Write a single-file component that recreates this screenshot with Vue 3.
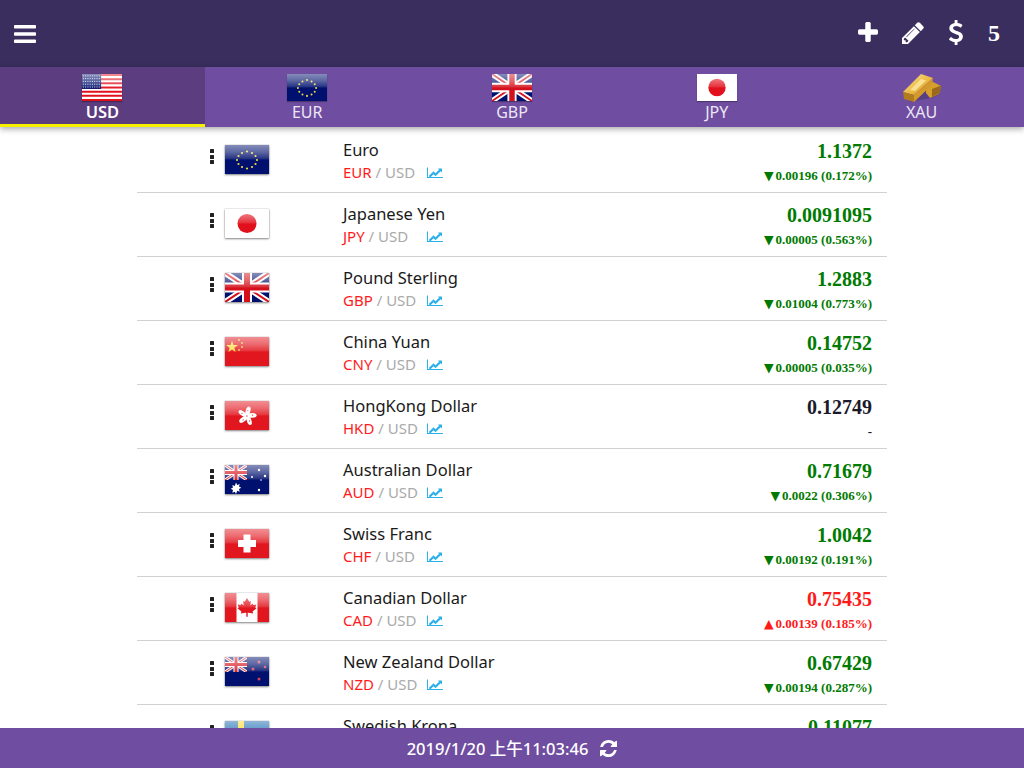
<script setup>
const tabs = [
  { code: 'USD', active: true },
  { code: 'EUR' },
  { code: 'GBP' },
  { code: 'JPY' },
  { code: 'XAU' }
]
const rows = [
  { code: 'EUR', name: 'Euro', price: '1.1372', change: '▼', diff: '0.00196 (0.172%)', tone: 'down' },
  { code: 'JPY', name: 'Japanese Yen', price: '0.0091095', change: '▼', diff: '0.00005 (0.563%)', tone: 'down' },
  { code: 'GBP', name: 'Pound Sterling', price: '1.2883', change: '▼', diff: '0.01004 (0.773%)', tone: 'down' },
  { code: 'CNY', name: 'China Yuan', price: '0.14752', change: '▼', diff: '0.00005 (0.035%)', tone: 'down' },
  { code: 'HKD', name: 'HongKong Dollar', price: '0.12749', change: '', diff: '-', tone: 'flat' },
  { code: 'AUD', name: 'Australian Dollar', price: '0.71679', change: '▼', diff: '0.0022 (0.306%)', tone: 'down' },
  { code: 'CHF', name: 'Swiss Franc', price: '1.0042', change: '▼', diff: '0.00192 (0.191%)', tone: 'down' },
  { code: 'CAD', name: 'Canadian Dollar', price: '0.75435', change: '▲', diff: '0.00139 (0.185%)', tone: 'up' },
  { code: 'NZD', name: 'New Zealand Dollar', price: '0.67429', change: '▼', diff: '0.00194 (0.287%)', tone: 'down' },
  { code: 'SEK', name: 'Swedish Krona', price: '0.11077', change: '▼', diff: '0.00031 (0.279%)', tone: 'down' }
]
</script>

<template>
  <div class="app">
    <svg class="sprite" width="0" height="0" aria-hidden="true">
      <defs>
        <linearGradient id="gloss" x1="0" y1="0" x2="0" y2="1">
          <stop offset="0" stop-color="#fff" stop-opacity=".52" />
          <stop offset=".25" stop-color="#fff" stop-opacity=".36" />
          <stop offset=".46" stop-color="#fff" stop-opacity=".16" />
          <stop offset=".52" stop-color="#fff" stop-opacity="0" />
          <stop offset="1" stop-color="#000" stop-opacity="0" />
        </linearGradient>
        <linearGradient id="gold" x1="0" y1="0" x2="1" y2="1">
          <stop offset="0" stop-color="#fbe58e" />
          <stop offset=".6" stop-color="#eab640" />
          <stop offset="1" stop-color="#c98d20" />
        </linearGradient>
        <g id="stars-eu" fill="#f0da40">
          <circle cx="22" cy="6.500" r="1.100" /><circle cx="27" cy="8" r="1.100" /><circle cx="30.500" cy="11" r="1.100" />
          <circle cx="32" cy="15" r="1.100" /><circle cx="30.500" cy="19" r="1.100" /><circle cx="27" cy="22" r="1.100" />
          <circle cx="22" cy="23.500" r="1.100" /><circle cx="17" cy="22" r="1.100" /><circle cx="13.500" cy="19" r="1.100" />
          <circle cx="12" cy="15" r="1.100" /><circle cx="13.500" cy="11" r="1.100" /><circle cx="17" cy="8" r="1.100" />
        </g>
        <g id="union">
          <rect width="44" height="29" fill="#00106e" />
          <path d="M0 0 44 29M44 0 0 29" stroke="#fff" stroke-width="6" />
          <path d="M0 0 44 29M44 0 0 29" stroke="#d5101c" stroke-width="2" />
          <path d="M22 0V29M0 14.500H44" stroke="#fff" stroke-width="10" />
          <path d="M22 0V29M0 14.500H44" stroke="#d5101c" stroke-width="6" />
        </g>
        <g id="petal">
          <ellipse cx="23" cy="10" rx="2.300" ry="4.600" transform="rotate(18 23 10)" fill="#fff" />
          <circle cx="22.800" cy="9.500" r=".6" fill="#e2161e" />
        </g>
        <symbol id="flag-USD" viewBox="0 0 44 29" preserveAspectRatio="none">
          <rect width="44" height="29" fill="#fff" />
          <path d="M0 1.100H44M0 5.600H44M0 10H44M0 14.500H44M0 19H44M0 23.400H44M0 27.900H44" stroke="#e2101c" stroke-width="2.200" />
          <rect width="21" height="16" fill="#00106e" />
          <path d="M1 2H21M1 5H21M1 8H21M1 11H21M1 14H21" stroke="#fff" stroke-width="1" stroke-dasharray="1 1.500" />
        </symbol>
        <symbol id="flag-EUR" viewBox="0 0 44 29" preserveAspectRatio="none">
          <rect width="44" height="29" fill="#00106e" />
          <use href="#stars-eu" />
        </symbol>
        <symbol id="flag-GBP" viewBox="0 0 44 29" preserveAspectRatio="none">
          <use href="#union" />
        </symbol>
        <symbol id="flag-JPY" viewBox="0 0 44 29" preserveAspectRatio="none">
          <rect width="44" height="29" fill="#fff" />
          <circle cx="22" cy="14.500" r="9.500" fill="#e2101c" />
        </symbol>
        <symbol id="flag-CNY" viewBox="0 0 44 29" preserveAspectRatio="none">
          <rect width="44" height="29" fill="#e2161e" />
          <path d="M7 3.500 8.400 8 13 8 9.300 10.700 10.700 15 7 12.400 3.300 15 4.700 10.700 1 8 5.600 8Z" fill="#f8e040" />
          <circle cx="14" cy="3" r="1" fill="#f0c040" /><circle cx="17" cy="6" r="1" fill="#f0c040" />
          <circle cx="17" cy="10" r="1" fill="#f0c040" /><circle cx="14" cy="13" r="1" fill="#f0c040" />
        </symbol>
        <symbol id="flag-HKD" viewBox="0 0 44 29" preserveAspectRatio="none">
          <rect width="44" height="29" fill="#e2161e" />
          <use href="#petal" />
          <use href="#petal" transform="rotate(72 22 15)" />
          <use href="#petal" transform="rotate(144 22 15)" />
          <use href="#petal" transform="rotate(216 22 15)" />
          <use href="#petal" transform="rotate(288 22 15)" />
        </symbol>
        <symbol id="flag-AUD" viewBox="0 0 44 29" preserveAspectRatio="none">
          <rect width="44" height="29" fill="#00106e" />
          <svg x="0" y="0" width="22" height="15" viewBox="0 0 44 29" preserveAspectRatio="none"><use href="#union" /></svg>
          <g fill="#fff">
            <path d="M11 17.500l1.200 2.400 2.500-1-.7 2.600 2.300 1.300-2.300 1.300.7 2.600-2.500-1L11 29l-1.200-2.300-2.500 1 .7-2.600-2.300-1.300 2.300-1.300-.7-2.600 2.500 1z" />
            <circle cx="34" cy="5" r="1.200" /><circle cx="27" cy="12" r="1" /><circle cx="40" cy="11" r="1.200" />
            <circle cx="36" cy="15" r=".8" /><circle cx="34" cy="25" r="1.200" />
          </g>
        </symbol>
        <symbol id="flag-CHF" viewBox="0 0 44 29" preserveAspectRatio="none">
          <rect width="44" height="29" fill="#e2161e" />
          <path d="M18.500 5.500h7v5.500H31v7h-5.500v5.500h-7V18H13v-7h5.500z" fill="#fff" />
        </symbol>
        <symbol id="flag-CAD" viewBox="0 0 44 29" preserveAspectRatio="none">
          <rect width="44" height="29" fill="#fff" />
          <rect width="11.500" height="29" fill="#e2161e" />
          <rect x="32.500" width="11.500" height="29" fill="#e2161e" />
          <path d="M22 5l2.300 3.800 1.600-.8-.6 4.500 2.300-2 .7 1.600 3-.5-1 3 1.200.7-3.900 3.300.6 1.800-4.500-.7h-1v4h-1.400v-4h-1l-4.500.7.600-1.800-3.900-3.300 1.200-.7-1-3 3 .5.700-1.600 2.300 2-.6-4.500 1.600.8z" fill="#e2161e" />
        </symbol>
        <symbol id="flag-NZD" viewBox="0 0 44 29" preserveAspectRatio="none">
          <rect width="44" height="29" fill="#00106e" />
          <svg x="0" y="0" width="22" height="15" viewBox="0 0 44 29" preserveAspectRatio="none"><use href="#union" /></svg>
          <g fill="#d8405a">
            <circle cx="34" cy="5" r="1.500" /><circle cx="28" cy="12" r="1.500" />
            <circle cx="40" cy="10" r="1.300" /><circle cx="34" cy="22" r="1.500" />
          </g>
        </symbol>
        <symbol id="flag-SEK" viewBox="0 0 44 29" preserveAspectRatio="none">
          <rect width="44" height="29" fill="#1668b0" />
          <rect x="13" width="6" height="29" fill="#fdd820" />
          <rect y="12" width="44" height="6" fill="#fdd820" />
        </symbol>
      </defs>
    </svg>

    <header class="topbar">
      <svg class="ic-bars" viewBox="128 256 1536 1280" preserveAspectRatio="none"><path fill="#fff" d="M1664 1344v128q0 26-19 45t-45 19H192q-26 0-45-19t-19-45v-128q0-26 19-45t45-19h1408q26 0 45 19t19 45zm0-512v128q0 26-19 45t-45 19H192q-26 0-45-19t-19-45V832q0-26 19-45t45-19h1408q26 0 45 19t19 45zm0-512v128q0 26-19 45t-45 19H192q-26 0-45-19t-19-45V320q0-26 19-45t45-19h1408q26 0 45 19t19 45z" /></svg>
      <div class="actions">
        <svg class="ic-plus" viewBox="192 128 1408 1408"><path fill="#fff" d="M1600 736v192q0 40-28 68t-68 28h-416v416q0 40-28 68t-68 28H800q-40 0-68-28t-28-68v-416H288q-40 0-68-28t-28-68V736q0-40 28-68t68-28h416V224q0-40 28-68t68-28h192q40 0 68 28t28 68v416h416q40 0 68 28t28 68z" /></svg>
        <svg class="ic-pencil" viewBox="128 128 1536 1536"><path fill="#fff" d="M491 1536l91-91-235-235-91 91v107h128v128h107zm523-928q0-22-22-22-10 0-17 7l-542 542q-7 7-7 17 0 22 22 22 10 0 17-7l542-542q7-7 7-17zm-54-192l416 416-832 832H128v-416zm683 96q0 53-37 90l-166 166-416-416 166-165q36-38 90-38 53 0 91 38l235 234q37 39 37 91z" /></svg>
        <svg class="ic-usd" viewBox="430 0 940 1792" preserveAspectRatio="none"><path fill="#fff" d="M1362 1185q0 153-99.500 263.500t-258.500 136.500v175q0 14-9 23t-23 9H837q-13 0-22.500-9.500T805 1760v-175q-66-9-127.500-31T576 1509.500t-74-48-46.500-37.500-17.500-18q-17-21-2-41l103-135q7-10 23-12 15-2 24 9l2 2q113 99 243 125 37 8 74 8 81 0 142.500-43t61.500-122q0-28-15-53t-33.500-42-58.500-37.500-66-32-80-32.500q-39-16-61.500-25T733 948.500t-62.500-31T614 882t-53.500-42.500-43.500-49-35.500-58-21-66.500-8.500-78q0-138 98-242t255-134V32q0-13 9.500-22.500T837 0h135q14 0 23 9t9 23v176q57 6 110.500 23t87 33.500T1265 302t39 29 15 14q17 18 5 38l-81 146q-8 15-23 16-14 3-27-7-3-3-14.500-12t-39-26.500-58.500-32-74.500-26T921 430q-95 0-155 43t-60 111q0 26 8.500 48t29.500 41.500 39.500 33 56 31 60.500 27 70 27.500q53 20 81 31.500t76 35 75.500 42.500 62 50 53 63.500 31.500 76.500 13 94z" /></svg>
        <span class="count">5</span>
      </div>
    </header>

    <nav class="tabs">
      <div v-for="t in tabs" :key="t.code" class="tab" :class="{ active: t.active }">
        <svg v-if="t.code === 'XAU'" class="tab-flag gold" viewBox="0 0 40 30">
          <path d="M6 29 30 25 38 21 22 18Z" fill="#4a3570" opacity=".6" />
          <path d="M24 12 31 9 39 13 37 21 28 25 24 20Z" fill="#d79f2e" />
          <path d="M30 16 39 12.500 38 20 30 24Z" fill="#9a6a1a" />
          <path d="M1 19 19 1 31 5 12 22Z" fill="url(#gold)" />
          <path d="M12 22 31 5 30 12 12 29Z" fill="#d39a2a" />
          <path d="M1 19 12 22 12 29 2 26Z" fill="#b07c1c" />
          <path d="M8 17 19 6 24 7.500 13 18Z" fill="#fdf0b0" opacity=".7" />
        </svg>
        <span v-else class="flagbox tab-flag">
          <svg class="flag"><use :href="'#flag-' + t.code" /></svg>
          <svg class="flag over" viewBox="0 0 44 29" preserveAspectRatio="none"><rect width="44" height="29" fill="url(#gloss)" /></svg>
        </span>
        <span class="tab-label">{{ t.code }}</span>
      </div>
    </nav>

    <main class="list-wrap">
      <div class="list">
        <div v-for="r in rows" :key="r.code" class="row">
          <div class="dots"><i></i><i></i><i></i></div>
          <span class="flagbox row-flag">
            <svg class="flag"><use :href="'#flag-' + r.code" /></svg>
            <svg class="flag over" viewBox="0 0 44 29" preserveAspectRatio="none"><rect width="44" height="29" fill="url(#gloss)" /></svg>
          </span>
          <div class="info">
            <div class="name">{{ r.name }}</div>
            <div class="pair">
              <span class="pair-text"><span class="base">{{ r.code }}</span><span class="quote"> / USD</span></span>
              <svg class="ic-chart" viewBox="0 0 2048 1792"><path fill="#2ab0ea" d="M2048 1536v128H0V320h128v1216h1920zM1920 448v435q0 21-19.500 29.500T1865 905l-121-121-633 633q-10 10-23 10t-23-10L832 1184l-416 416-192-192 585-585q10-10 23-10t23 10l233 233 464-464-121-121q-16-16-7.500-35.500T1453 448h435q14 0 23 9t9 23z" /></svg>
            </div>
          </div>
          <div class="quote-col" :class="r.tone">
            <div class="price">{{ r.price }}</div>
            <div class="diff"><span class="arrow">{{ r.change }}</span>{{ r.diff }}</div>
          </div>
        </div>
      </div>
    </main>

    <footer class="footer">
      <span>2019/1/20 上午11:03:46</span>
      <svg class="ic-refresh" viewBox="128 128 1536 1536"><path fill="#fff" d="M1639 1056q0 5-1 7-64 268-268 434.500T892 1664q-146 0-282.500-55T366 1452l-129 129q-19 19-45 19t-45-19-19-45v-448q0-26 19-45t45-19h448q26 0 45 19t19 45-19 45l-137 137q71 66 161 102t187 36q134 0 250-65t186-179q11-17 53-117 8-23 30-23h192q13 0 22.500 9.500t9.500 22.500zm25-800v448q0 26-19 45t-45 19h-448q-26 0-45-19t-19-45 19-45l138-138q-148-137-349-137-134 0-250 65T460 628q-11 17-53 117-8 23-30 23H178q-13 0-22.500-9.500T146 736v-7q65-268 270-434.500T896 128q146 0 284 55.500T1425 340l130-129q19-19 45-19t45 19 19 45z" /></svg>
    </footer>
  </div>
</template>

<style scoped>
.app {
  width: 1024px;
  height: 768px;
  display: flex;
  flex-direction: column;
  overflow: hidden;
  background: #fff;
  font-family: "Noto Sans", "Noto Sans CJK SC", sans-serif;
  color: #1a1a1a;
}
.sprite { position: absolute; }
.topbar {
  flex: 0 0 67px;
  background: #392e5e;
  display: flex;
  align-items: center;
  justify-content: space-between;
  padding: 0 24px 0 14px;
}
.ic-bars { width: 22px; height: 18px; }
.actions { display: flex; align-items: center; }
.ic-plus { width: 20px; height: 20px; margin-top: -3px; }
.ic-pencil { width: 22px; height: 22px; margin-left: 24px; margin-top: -1px; }
.ic-usd { width: 14px; height: 25px; margin-left: 25px; margin-top: -2px; }
.count {
  margin-left: 25px;
  font: bold 24px "Liberation Serif", serif;
  color: #fff;
  width: 12px;
}
.tabs {
  flex: 0 0 60px;
  display: flex;
  background: #6f4da0;
  box-shadow: 0 2px 6px rgba(0, 0, 0, .35);
  position: relative;
  z-index: 2;
}
.tab {
  flex: 1;
  height: 60px;
  box-sizing: border-box;
  display: flex;
  flex-direction: column;
  align-items: center;
  padding-top: 7px;
  color: #ece6f5;
}
.tab.active {
  background: #5b3d80;
  border-bottom: 3px solid #f5f000;
  color: #fff;
}
.tab-flag {
  width: 40px;
  height: 27px;
  display: block;
  flex: none;
}
.tab-flag.gold { width: 40px; height: 30px; margin-top: -1px; margin-bottom: -2px; }
.tab-label {
  font-size: 16px;
  line-height: 20px;
  margin-top: 1px;
}
.tab.active .tab-label { font-size: 16.500px; font-weight: 600; }
.flagbox { position: relative; display: block; box-shadow: 0 1px 1px rgba(0, 0, 0, .3); }
.flag { position: absolute; inset: 0; width: 100%; height: 100%; display: block; }
.row-flag {
  width: 44px;
  height: 29px;
  flex: none;
  margin-left: 11px;
  margin-top: 16px;
  box-shadow: 0 0 1px rgba(0, 0, 0, .35), 0 1px 2px rgba(0, 0, 0, .45);
}
.list-wrap {
  flex: 1;
  min-height: 0;
  overflow: hidden;
  padding-top: 2px;
}
.list { width: 750px; margin: 0 auto; }
.row {
  height: 64px;
  box-sizing: border-box;
  border-bottom: 1px solid #d2d2d2;
  display: flex;
  align-items: flex-start;
  padding: 0 15px 0 73px;
}
.dots {
  flex: none;
  width: 4px;
  display: flex;
  flex-direction: column;
  gap: 1.500px;
  margin-top: 20px;
}
.dots i {
  display: block;
  width: 4px;
  height: 4px;
  border-radius: .5px;
  background: #222;
}
.info { margin-left: 74px; padding-top: 10px; flex: 1; }
.name { font-size: 16.500px; line-height: 22px; }
.pair { font-size: 15px; line-height: 22px; display: flex; align-items: center; white-space: pre; font-kerning: none; }
.pair-text { width: 84px; flex: none; }
.base { color: #ff1a1a; }
.quote { color: #aaa; }
.ic-chart { width: 16px; height: 14px; }
.quote-col { text-align: right; font-family: "Liberation Serif", serif; font-weight: bold; padding-top: 10px; }
.price { font-size: 20px; line-height: 24px; }
.diff { font-size: 13px; line-height: 16px; margin-top: 5px; }
.arrow { font-family: "DejaVu Sans", sans-serif; font-size: 12.500px; margin-right: 2px; line-height: 14px; }
.down { color: #007a00; }
.up { color: #ff1a1a; }
.flat { color: #1a1a2a; }
.footer {
  flex: 0 0 40px;
  background: #6f4da0;
  color: #fff;
  display: flex;
  align-items: center;
  justify-content: center;
  gap: 12px;
  font-size: 16.500px;
  font-weight: 500;
  position: relative;
  z-index: 2;
}
.ic-refresh { width: 17px; height: 17px; }
</style>
